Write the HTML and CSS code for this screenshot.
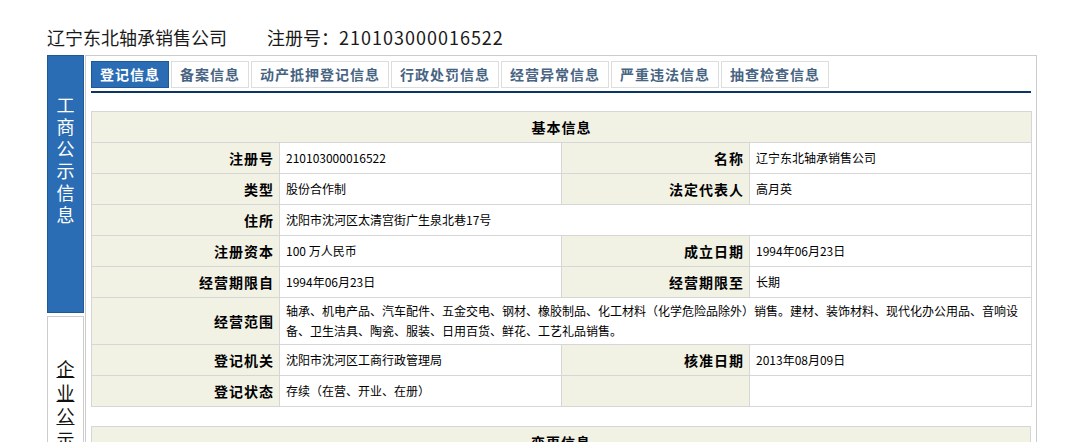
FILE: index.html
```html
<!DOCTYPE html>
<html lang="zh-CN">
<head>
  <meta charset="UTF-8">
  <title>辽宁东北轴承销售公司</title>
  <link rel="stylesheet" href="styles.css">
</head>
<body>
  <div class="title">
    <span class="name">辽宁东北轴承销售公司</span><span class="reg">注册号：<span class="reg-no">210103000016522</span></span>
  </div>

  <div class="layout">
    <div class="side">
      <div class="side-item side-active"><span>工商公示信息</span></div>
      <div class="side-item side-link"><a href="#">企业公示信息</a></div>
    </div>

    <div class="main">
      <ul class="tabs">
        <li class="tab tab-active">登记信息</li>
        <li class="tab">备案信息</li>
        <li class="tab">动产抵押登记信息</li>
        <li class="tab">行政处罚信息</li>
        <li class="tab">经营异常信息</li>
        <li class="tab">严重违法信息</li>
        <li class="tab">抽查检查信息</li>
      </ul>

      <table class="info">
        <colgroup>
          <col class="col-label"><col class="col-value"><col class="col-label"><col class="col-value">
        </colgroup>
        <tr><th colspan="4">基本信息</th></tr>
        <tr>
          <td class="label">注册号</td><td>210103000016522</td>
          <td class="label">名称</td><td>辽宁东北轴承销售公司</td>
        </tr>
        <tr>
          <td class="label">类型</td><td>股份合作制</td>
          <td class="label">法定代表人</td><td>高月英</td>
        </tr>
        <tr>
          <td class="label">住所</td><td colspan="3">沈阳市沈河区太清宫街广生泉北巷17号</td>
        </tr>
        <tr>
          <td class="label">注册资本</td><td>100&nbsp;万人民币</td>
          <td class="label">成立日期</td><td>1994年06月23日</td>
        </tr>
        <tr>
          <td class="label">经营期限自</td><td>1994年06月23日</td>
          <td class="label">经营期限至</td><td>长期</td>
        </tr>
        <tr>
          <td class="label">经营范围</td>
          <td colspan="3" class="scope">轴承、机电产品、汽车配件、五金交电、钢材、橡胶制品、化工材料（化学危险品除外）销售。建材、装饰材料、现代化办公用品、音响设备、卫生洁具、陶瓷、服装、日用百货、鲜花、工艺礼品销售。</td>
        </tr>
        <tr>
          <td class="label">登记机关</td><td>沈阳市沈河区工商行政管理局</td>
          <td class="label">核准日期</td><td>2013年08月09日</td>
        </tr>
        <tr>
          <td class="label">登记状态</td><td>存续（在营、开业、在册）</td>
          <td class="label"></td><td></td>
        </tr>
      </table>

      <table class="info info-next">
        <tr><th colspan="4">变更信息</th></tr>
        <tr>
          <td class="label">变更事项</td><td>变更前内容</td>
          <td class="label">变更后内容</td><td>变更日期</td>
        </tr>
      </table>
    </div>
  </div>
</body>
</html>
```

FILE: styles.css
```css
* {
  margin: 0;
  padding: 0;
  box-sizing: border-box;
}

body {
  font-family: "Noto Sans CJK SC", sans-serif;
  font-size: 12px;
  color: #000;
  background: #fff;
}

.title {
  height: 55px;
  padding: 25px 0 0 47px;
  font-size: 18px;
  line-height: 24px;
  color: #1a1a1a;
}

.reg {
  margin-left: 40px;
}

.reg-no {
  letter-spacing: 1px;
}

.layout {
  display: flex;
  align-items: flex-start;
  padding-left: 47px;
}

.side {
  width: 37px;
  margin-right: 1px;
}

.side-item {
  height: 258px;
  margin-bottom: 3px;
  border: 1px solid #ccc;
  padding-top: 37px;
  font-size: 18px;
  line-height: 22px;
}

.side-item span,
.side-item a {
  display: block;
  width: 18px;
  margin: 0 auto;
}

.side-active {
  background: #2a6db4;
  border-color: #1f5896;
  color: #fff;
}

.side-link {
  padding-top: 40px;
  line-height: 23.5px;
}

.side-link a {
  color: #111;
}

.main {
  width: 952px;
  border: 1px solid #ccc;
  padding: 5px;
}

.tabs {
  display: flex;
  gap: 2px;
  list-style: none;
  padding-bottom: 3px;
  border-bottom: 2px solid #0b3565;
}

.tab {
  height: 27px;
  line-height: 25px;
  padding: 0 8px;
  border: 1px solid #ddd;
  font-size: 14px;
  font-weight: bold;
  letter-spacing: 1px;
  color: #476482;
  cursor: pointer;
}

.tab-active {
  background: #2a6db4;
  border-color: #1f5896;
  color: #fff;
}

.info {
  width: 100%;
  table-layout: fixed;
  border-collapse: collapse;
  margin-top: 18px;
}

.col-label {
  width: 188px;
}

.col-value {
  width: 282px;
}

.info th,
.info td {
  height: 31px;
  padding: 0 6px;
  border: 1px solid #d6d6d6;
  line-height: 20px;
  text-align: left;
}

.info th {
  background: #f1f1e4;
  font-size: 14px;
  letter-spacing: 1px;
  text-align: center;
}

.info .label {
  background: #f1f1e4;
  text-align: right;
  padding-right: 5px;
  font-size: 14px;
  font-weight: bold;
  letter-spacing: 1px;
}

.info .scope {
  height: 47px;
  padding: 3px 6px;
}

.info-next {
  margin-top: 19px;
}
```
